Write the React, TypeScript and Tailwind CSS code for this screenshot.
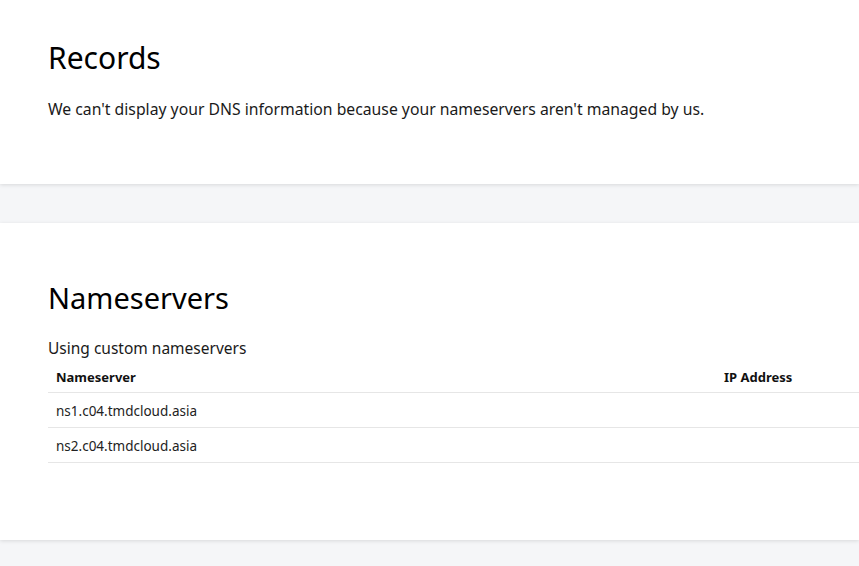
export default function App() {
  const rows = ['ns1.c04.tmdcloud.asia', 'ns2.c04.tmdcloud.asia'];
  return (
    <div className="min-h-[566px] bg-[#f5f6f8] text-[#111] font-['Noto_Sans',sans-serif] overflow-hidden">
      <section className="bg-white h-[184px] px-12 pt-[38px] shadow-[0_1px_4px_rgba(0,0,0,0.12)]">
        <h2 className="text-[30px] leading-[40px] font-normal text-black">Records</h2>
        <p className="mt-[19px] text-[15.75px] leading-6 text-[#1a1a1a]">
          We can't display your DNS information because your nameservers aren't managed by us.
        </p>
      </section>
      <div className="h-[39px]" />
      <section className="bg-white h-[317px] pl-12 pt-[55px] shadow-[0_1px_4px_rgba(0,0,0,0.12)]">
        <h2 className="text-[29px] leading-[40px] font-normal text-black">Nameservers</h2>
        <p className="mt-[18px] text-[15.5px] leading-6 text-[#1a1a1a]">Using custom nameservers</p>
        <table className="w-full text-[13px] border-collapse">
          <thead>
            <tr className="border-b border-[#e6e6e6]">
              <th className="text-left font-bold px-2 pt-[3px] h-[32px] w-[676px]">Nameserver</th>
              <th className="text-left font-bold px-0 pt-[3px] h-[32px]">IP Address</th>
            </tr>
          </thead>
          <tbody>
            {rows.map((r) => (
              <tr key={r} className="border-b border-[#e6e6e6]">
                <td className="px-2 pt-[3px] h-[35px] text-[13.5px] text-[#222]">{r}</td>
                <td />
              </tr>
            ))}
          </tbody>
        </table>
      </section>
    </div>
  );
}
